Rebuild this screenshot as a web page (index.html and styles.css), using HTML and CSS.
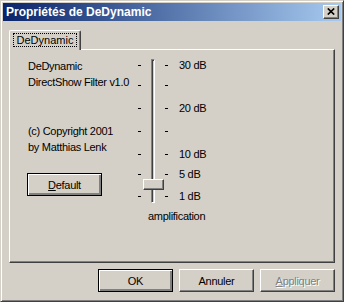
FILE: index.html
```html
<!DOCTYPE html>
<html lang="fr">
<head>
  <meta charset="UTF-8">
  <title>Propriétés de DeDynamic</title>
  <link rel="stylesheet" href="styles.css">
</head>
<body>

  <div class="window">
    <div class="titlebar">
      <span class="title">Propriétés de DeDynamic</span>
      <button class="close-btn" aria-label="Fermer">
        <svg width="8" height="7" viewBox="0 0 8 7">
          <path d="M0.8 0.5 L7.2 6.5 M7.2 0.5 L0.8 6.5" stroke="#000" stroke-width="1.7" fill="none"/>
        </svg>
      </button>
    </div>

    <div class="dialog">
      <!-- Tabs -->
      <div class="tabs">
        <div class="tab active"><span class="focus">DeDynamic</span></div>
      </div>

      <div class="panel">
        <!-- About text -->
        <div class="info">
          <p>DeDynamic<br>DirectShow Filter v1.0</p>
          <p class="copyright">(c) Copyright 2001<br>by Matthias Lenk</p>
          <button class="btn btn-default"><u>D</u>efault</button>
        </div>

        <!-- Amplification trackbar -->
        <div class="trackbar">
          <div class="scale">
            <div class="track"><div class="thumb"></div></div>

            <span class="dash left row-1"></span><span class="dash right row-1"></span><span class="label row-1">30 dB</span>
            <span class="dash left row-2"></span><span class="dash right row-2"></span>
            <span class="dash left row-3"></span><span class="dash right row-3"></span><span class="label row-3">20 dB</span>
            <span class="dash left row-4"></span><span class="dash right row-4"></span>
            <span class="dash left row-5"></span><span class="dash right row-5"></span><span class="label row-5">10 dB</span>
            <span class="dash left row-6"></span><span class="dash right row-6"></span><span class="label row-6">5 dB</span>
            <span class="dash left row-7"></span><span class="dash right row-7"></span><span class="label row-7">1 dB</span>
          </div>
          <div class="caption">amplification</div>
        </div>
      </div>

      <div class="actions">
        <button class="btn btn-default">OK</button>
        <button class="btn">Annuler</button>
        <button class="btn" disabled><u>A</u>ppliquer</button>
      </div>
    </div>
  </div>

</body>
</html>
```

FILE: styles.css
```css
:root {
  --face: #D4D0C8;
  --shadow: #808080;
  --dark: #404040;
  --light: #fff;
  --title-from: #0A246A;
  --title-to: #A6CAF0;
}

body {
  margin: 0;
  font-family: "Liberation Sans", Arial, sans-serif;
  font-size: 11px;
  letter-spacing: -0.3px;
  color: #000;
  background: var(--face);
}

.window {
  width: 344px;
  height: 302px;
  box-sizing: border-box;
  display: flex;
  flex-direction: column;
  padding: 2px;
  background: var(--face);
  border: 1px solid;
  border-color: var(--face) var(--dark) var(--dark) var(--face);
  box-shadow: inset 1px 1px var(--light), inset -1px -1px var(--shadow);
}

/* Title bar */
.titlebar {
  height: 18px;
  display: flex;
  align-items: flex-start;
  justify-content: space-between;
  background: linear-gradient(to right, var(--title-from), var(--title-to));
}

.title {
  color: #fff;
  font-weight: bold;
  font-size: 12px;
  letter-spacing: 0;
  line-height: 18px;
  padding-left: 3px;
}

.close-btn {
  width: 16px;
  height: 14px;
  margin: 2px 2px 0 0;
  padding: 0;
  display: flex;
  align-items: center;
  justify-content: center;
  background: var(--face);
  border: 1px solid;
  border-color: var(--light) var(--dark) var(--dark) var(--light);
  box-shadow: inset -1px -1px var(--shadow);
}

.close-btn svg {
  display: block;
  margin: 0 1px 1px 0;
}

/* Dialog body */
.dialog {
  flex: 1;
  display: flex;
  flex-direction: column;
  padding: 9px 6px 7px 6px;
}

.tabs {
  display: flex;
  height: 19px;
}

.tab {
  position: relative;
  z-index: 1;
  width: 72px;
  height: 20px;
  box-sizing: border-box;
  display: flex;
  align-items: center;
  justify-content: center;
  background: var(--face);
  border: 1px solid;
  border-color: var(--light) var(--dark) transparent var(--light);
  border-bottom: none;
  border-radius: 2px 2px 0 0;
  box-shadow: inset -1px 0 var(--shadow);
}

.tab .focus {
  padding: 0 3px;
  line-height: 12px;
  letter-spacing: 0;
  outline: 1px dotted #000;
  margin-top: -2px;
}

.panel {
  height: 214px;
  box-sizing: border-box;
  display: grid;
  grid-template-columns: 111px auto;
  padding: 8px 0 0 17px;
  border: 1px solid;
  border-color: var(--light) var(--dark) var(--dark) var(--light);
  box-shadow: inset -1px -1px var(--shadow);
}

/* About text */
.info p {
  margin: 0;
  line-height: 16px;
  padding-left: 1px;
}

.info .copyright {
  margin-top: 33px;
}

.info .btn {
  margin-top: 18px;
}

/* Trackbar */
.scale {
  display: grid;
  grid-template-columns: 3px 10px 4px 10px 3px 11px auto;
  grid-template-rows: 20px 23px 23px 23px 20px 22px 14px;
}

.track {
  grid-column: 3;
  grid-row: 1 / -1;
  position: relative;
  margin-top: 1px;
  box-sizing: border-box;
  border: 1px solid;
  border-color: var(--shadow) var(--light) var(--light) var(--shadow);
  box-shadow: inset 1px 1px var(--dark);
}

.thumb {
  position: absolute;
  left: -9px;
  top: 119px;
  width: 21px;
  height: 11px;
  box-sizing: border-box;
  background: var(--face);
  border: 1px solid;
  border-color: var(--light) var(--dark) var(--dark) var(--light);
  box-shadow: inset -1px -1px var(--shadow);
}

.dash {
  height: 1px;
  margin-top: 7px;
  background: #000;
}

.dash.left { grid-column: 1; }
.dash.right { grid-column: 5; }

.label {
  grid-column: 7;
  line-height: 14px;
  white-space: nowrap;
}

.row-1 { grid-row: 1; }
.row-2 { grid-row: 2; }
.row-3 { grid-row: 3; }
.row-4 { grid-row: 4; }
.row-5 { grid-row: 5; }
.row-6 { grid-row: 6; }
.row-7 { grid-row: 7; }

.caption {
  margin-top: 6px;
  padding-left: 10px;
  line-height: 14px;
}

/* Buttons */
.btn {
  width: 75px;
  height: 23px;
  padding: 0;
  box-sizing: border-box;
  font-family: inherit;
  font-size: 11px;
  letter-spacing: inherit;
  color: #000;
  background: var(--face);
  border: 1px solid;
  border-color: var(--light) var(--dark) var(--dark) var(--light);
  box-shadow: inset -1px -1px var(--shadow);
}

.btn-default {
  border: 1px solid #000;
  box-shadow: inset 1px 1px var(--light), inset -2px -2px var(--shadow);
}

.btn:disabled {
  color: var(--shadow);
  text-shadow: 1px 1px var(--light);
}

.actions {
  display: flex;
  justify-content: flex-end;
  gap: 6px;
  margin-top: 6px;
}
```
